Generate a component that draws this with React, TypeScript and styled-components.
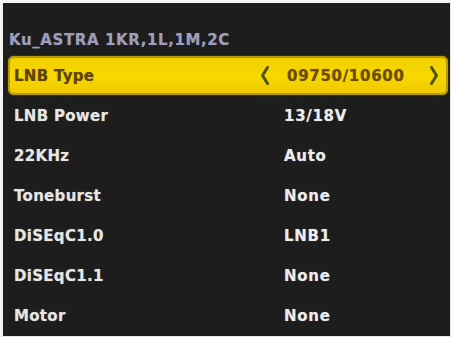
import React from 'react';
import styled, { createGlobalStyle } from 'styled-components';

const GlobalStyle = createGlobalStyle`
  html, body {
    margin: 0;
    padding: 0;
    background: #f4f4f4;
  }
`;

const Screen = styled.div`
  width: 451px;
  height: 337px;
  box-sizing: border-box;
  border-top: 3px solid #f4f4f4;
  border-left: 3px solid #f4f4f4;
  border-right: 1px solid #e8e8e8;
  border-bottom: 1px solid #e8e8e8;
  background: #1d1d1e;
  padding: 0 2px 0 5px;
  display: flex;
  flex-direction: column;
  font-family: 'DejaVu Sans', 'Liberation Sans', sans-serif;
  font-weight: bold;
  overflow: hidden;
`;

const Title = styled.div`
  height: 53px;
  display: flex;
  align-items: center;
  padding: 21px 0 0 1px;
  box-sizing: border-box;
  font-size: 15px;
  letter-spacing: 0.6px;
  color: #9e9eb8;
  text-shadow: 0 0 1px rgba(160, 160, 190, 0.5);
`;

const Menu = styled.div`
  display: flex;
  flex-direction: column;
`;

const Row = styled.div<{ $selected?: boolean }>`
  height: ${p => (p.$selected ? '39px' : '40px')};
  box-sizing: border-box;
  display: grid;
  grid-template-columns: 246px 24px 1fr 18px;
  align-items: center;
  padding-left: 6px;
  font-size: 15px;
  letter-spacing: 0.3px;
  border-radius: 6px;
  color: ${p => (p.$selected ? '#5e4300' : '#e6e6e2')};
  background: ${p =>
    p.$selected ? 'linear-gradient(#f2cf00, #f7d800 50%, #eec800)' : 'transparent'};
  box-shadow: ${p =>
    p.$selected ? 'inset 0 0 0 2px #b89a06, 0 0 2px #6a5a10' : 'none'};
  text-shadow: ${p =>
    p.$selected ? '0 0 1px rgba(120, 80, 0, 0.6)' : '0 0 1px rgba(230, 230, 230, 0.5)'};
  margin-bottom: ${p => (p.$selected ? '1px' : '0')};
`;

const Label = styled.span`
  white-space: nowrap;
`;

const Value = styled.span<{ $selected?: boolean }>`
  white-space: nowrap;
  letter-spacing: 0.7px;
  padding-left: ${p => (p.$selected ? '3px' : '0')};
  color: ${p => (p.$selected ? '#6c4c00' : '#ececea')};
`;

const Arrow = styled.svg`
  width: 9px;
  height: 19px;
  display: block;
`;

const ArrowLeft = () => (
  <Arrow viewBox="0 0 9 19">
    <polyline points="7.5,1.5 2.5,9.5 7.5,17.5" fill="none" stroke="#4f5410" strokeWidth="3" strokeLinejoin="round" strokeLinecap="round" />
  </Arrow>
);

const ArrowRight = () => (
  <Arrow viewBox="0 0 9 19">
    <polyline points="1.5,1.5 6.5,9.5 1.5,17.5" fill="none" stroke="#4f5410" strokeWidth="3" strokeLinejoin="round" strokeLinecap="round" />
  </Arrow>
);

const items = [
  { label: 'LNB Type', value: '09750/10600' },
  { label: 'LNB Power', value: '13/18V' },
  { label: '22KHz', value: 'Auto' },
  { label: 'Toneburst', value: 'None' },
  { label: 'DiSEqC1.0', value: 'LNB1' },
  { label: 'DiSEqC1.1', value: 'None' },
  { label: 'Motor', value: 'None' },
];

const App: React.FC = () => {
  const selected = 0;
  return (
    <>
      <GlobalStyle />
      <Screen>
        <Title>Ku_ASTRA 1KR,1L,1M,2C</Title>
        <Menu>
          {items.map((item, i) => (
            <Row key={item.label} $selected={i === selected}>
              <Label>{item.label}</Label>
              <span>{i === selected && <ArrowLeft />}</span>
              <Value $selected={i === selected}>{item.value}</Value>
              <span>{i === selected && <ArrowRight />}</span>
            </Row>
          ))}
        </Menu>
      </Screen>
    </>
  );
};

export default App;
